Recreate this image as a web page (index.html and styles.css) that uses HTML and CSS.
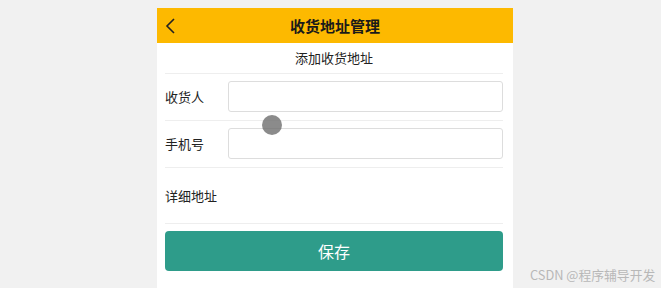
FILE: index.html
```html
<!DOCTYPE html>
<html lang="zh-CN">
<head>
    <meta charset="UTF-8">
    <meta name="viewport" content="width=device-width, initial-scale=1.0">
    <title>收货地址管理</title>
    <link rel="stylesheet" href="styles.css">
</head>
<body>
    <div class="page">
        <div class="top-bar">
            <span class="back">
                <svg width="12" height="16" viewBox="0 0 12 16"><path d="M9 1 L2 8 L9 15" fill="none" stroke="#222" stroke-width="1.6"/></svg>
            </span>
            <h1>收货地址管理</h1>
        </div>
        <div class="content">
            <div class="subtitle">添加收货地址</div>
            <div class="form-row">
                <label>收货人</label>
                <input type="text">
            </div>
            <div class="form-row">
                <label>手机号</label>
                <input type="text">
            </div>
            <div class="form-row address">
                <label>详细地址</label>
            </div>
            <button class="save">保存</button>
        </div>
    </div>
    <div class="cursor"></div>
    <div class="watermark">CSDN @程序辅导开发</div>
</body>
</html>
```

FILE: styles.css
```css
body {
    margin: 0;
    padding-top: 8px;
    background-color: #f1f1f1;
    font-family: "Noto Sans CJK SC", "Noto Sans", sans-serif;
    height: 280px;
    overflow: hidden;
}

.page {
    margin-left: 157px;
    width: 356px;
    height: 280px;
    background-color: #fff;
}

.top-bar {
    position: relative;
    height: 35px;
    background-color: #fdb900;
    display: flex;
    align-items: center;
    justify-content: center;
}

.top-bar h1 {
    margin: 0;
    font-size: 15px;
    font-weight: bold;
    color: #1a1a1a;
}

.back {
    position: absolute;
    left: 8px;
    top: 7px;
}

.content {
    padding: 0 10px 0 8px;
}

.subtitle {
    height: 30px;
    line-height: 30px;
    text-align: center;
    font-size: 13px;
    color: #222;
    border-bottom: 1px solid #eee;
}

.form-row {
    display: flex;
    align-items: center;
    padding: 7px 0 8px 0;
    border-bottom: 1px solid #eee;
}

.form-row label {
    width: 63px;
    font-size: 13px;
    color: #222;
}

.form-row input {
    flex: 1;
    height: 31px;
    box-sizing: border-box;
    border: 1px solid #ddd;
    border-radius: 3px;
}

.form-row.address {
    height: 40px;
}

.save {
    display: block;
    width: 100%;
    height: 40px;
    margin-top: 7px;
    border: none;
    border-radius: 4px;
    background-color: #2e9c8a;
    color: #fff;
    font-family: "Noto Sans CJK SC", sans-serif;
    font-size: 16px;
}

.cursor {
    position: absolute;
    left: 262px;
    top: 115px;
    width: 20px;
    height: 20px;
    border-radius: 50%;
    background-color: rgba(110, 110, 110, 0.8);
}

.watermark {
    position: absolute;
    left: 530px;
    top: 265px;
    font-size: 12.8px;
    color: #b8b8b8;
}
```
